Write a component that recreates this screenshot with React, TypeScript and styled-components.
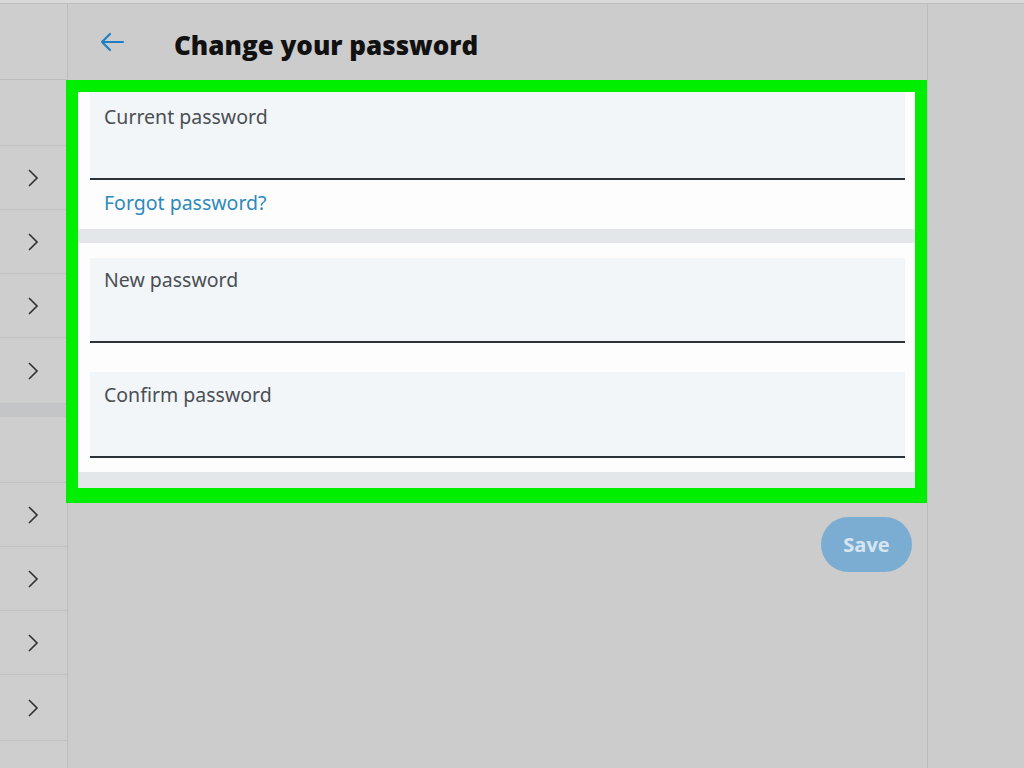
import styled, { createGlobalStyle } from 'styled-components';

const GlobalStyle = createGlobalStyle`
  html, body {
    margin: 0;
    padding: 0;
    background: #cccccc;
    font-family: "Noto Sans", "Open Sans", sans-serif;
  }
`;

const Page = styled.div`
  width: 1024px;
  height: 768px;
  overflow: hidden;
  display: flex;
  flex-direction: column;
  background: #cccccc;
`;

const TopStrip = styled.div`
  height: 3px;
  background: #d9d9d9;
  border-bottom: 1px solid #bfbfbf;
  flex-shrink: 0;
`;

const Columns = styled.div`
  flex: 1;
  display: flex;
`;

const Sidebar = styled.aside`
  width: 67px;
  border-right: 1px solid #bdbdbd;
  background: #cecece;
  display: flex;
  flex-direction: column;
`;

const SideHeader = styled.div`
  height: 75px;
  border-bottom: 1px solid #bdbdbd;
`;

const SideSpacer = styled.div`
  height: 65px;
  border-bottom: 1px solid #c2c2c2;
`;

const SideRow = styled.div<{ $height?: number }>`
  height: ${p => p.$height ?? 63}px;
  border-bottom: 1px solid #c2c2c2;
  display: flex;
  align-items: center;
  justify-content: flex-end;
  padding-right: 28px;
`;

const SideBand = styled.div`
  height: 13px;
  background: #c3c5c7;
`;

const Main = styled.main`
  width: 859px;
  border-right: 1px solid #bdbdbd;
  display: flex;
  flex-direction: column;
`;

const Header = styled.header`
  height: 76px;
  display: flex;
  align-items: center;
  padding-left: 30px;
  gap: 48px;
`;

const BackButton = styled.button`
  border: none;
  background: none;
  padding: 0;
  width: 28px;
  height: 28px;
  display: flex;
  align-items: center;
  justify-content: center;
  margin-top: -1px;
`;

const Title = styled.h1`
  margin: 5px 0 0;
  font-family: "Open Sans", "Noto Sans", sans-serif;
  font-weight: 800;
  font-size: 26px;
  color: #111111;
`;

const Highlight = styled.section`
  margin-left: -2px;
  border: 12px solid #00ee00;
  border-bottom-width: 15px;
  background: #fdfdfd;
  display: flex;
  flex-direction: column;
`;

const Field = styled.div<{ $height: number; $top?: number }>`
  margin: 0 10px 0 12px;
  height: ${p => p.$height}px;
  background: #f3f6f9;
  border-bottom: 2px solid #2b3238;
  padding: ${p => p.$top ?? 12}px 14px 0;
  box-sizing: border-box;
`;

const Label = styled.label`
  display: block;
  font-size: 19.5px;
  line-height: 26px;
  color: #4a4f54;
`;

const ForgotLink = styled.a`
  display: block;
  height: 49px;
  padding-left: 26px;
  font-size: 19.5px;
  line-height: 46px;
  color: #2d89bb;
`;

const Band = styled.div<{ $height: number }>`
  height: ${p => p.$height}px;
  background: #e4e7ea;
`;

const Gap = styled.div<{ $height: number }>`
  height: ${p => p.$height}px;
`;

const Actions = styled.div`
  display: flex;
  justify-content: flex-end;
  padding: 14px 15px 0 0;
`;

const SaveButton = styled.button`
  width: 91px;
  height: 55px;
  border: none;
  border-radius: 28px;
  background: #7badd3;
  color: #d6e5ef;
  font-family: "Open Sans", "Noto Sans", sans-serif;
  font-weight: 700;
  font-size: 20px;
`;

const RightArea = styled.div`
  flex: 1;
  background: #cccccc;
`;

function Chevron() {
  return (
    <svg width="12" height="20" viewBox="0 0 12 20" aria-hidden="true">
      <polyline points="2,2 10,10 2,18" fill="none" stroke="#2f2f2f" strokeWidth="1.6" />
    </svg>
  );
}

function BackArrow() {
  return (
    <svg width="26" height="20" viewBox="0 0 26 20" aria-hidden="true">
      <path d="M24 10H3M11 2L3 10l8 8" fill="none" stroke="#1f7fc4" strokeWidth="2.2" strokeLinecap="round" strokeLinejoin="round" />
    </svg>
  );
}

export default function App() {
  return (
    <Page>
      <GlobalStyle />
      <TopStrip />
      <Columns>
        <Sidebar>
          <SideHeader />
          <SideSpacer />
          <SideRow><Chevron /></SideRow>
          <SideRow><Chevron /></SideRow>
          <SideRow><Chevron /></SideRow>
          <SideRow $height={65}><Chevron /></SideRow>
          <SideBand />
          <SideSpacer />
          <SideRow><Chevron /></SideRow>
          <SideRow><Chevron /></SideRow>
          <SideRow><Chevron /></SideRow>
          <SideRow $height={65}><Chevron /></SideRow>
          <SideRow />
        </Sidebar>
        <Main>
          <Header>
            <BackButton aria-label="Back"><BackArrow /></BackButton>
            <Title>Change your password</Title>
          </Header>
          <Highlight>
            <Field $height={88}><Label>Current password</Label></Field>
            <ForgotLink>Forgot password?</ForgotLink>
            <Band $height={14} />
            <Gap $height={15} />
            <Field $height={85} $top={9}><Label>New password</Label></Field>
            <Gap $height={29} />
            <Field $height={86} $top={10}><Label>Confirm password</Label></Field>
            <Gap $height={14} />
            <Band $height={16} />
          </Highlight>
          <Actions>
            <SaveButton>Save</SaveButton>
          </Actions>
        </Main>
        <RightArea />
      </Columns>
    </Page>
  );
}
